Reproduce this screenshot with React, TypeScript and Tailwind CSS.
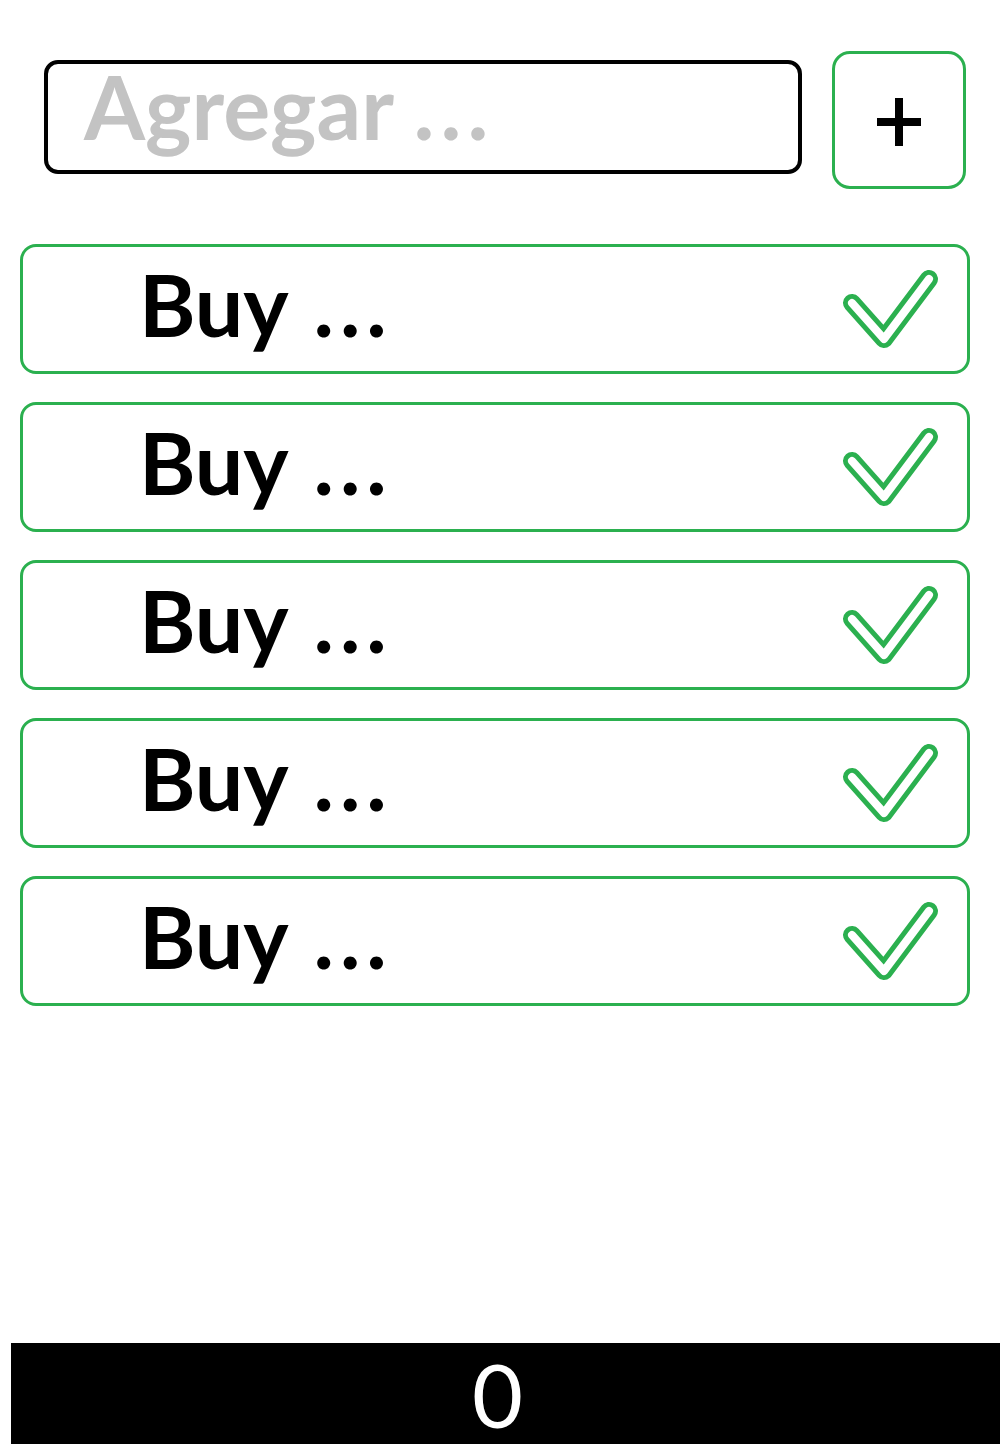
const items = ['Buy', 'Buy', 'Buy', 'Buy', 'Buy'];

function CheckIcon() {
  return (
    <svg width="98" height="82" viewBox="0 0 98 82" fill="none">
      <polyline points="10,35 42,71 87,11" stroke="#2bb04f" strokeWidth="18" strokeLinecap="round" strokeLinejoin="round" />
      <polyline points="10,35 42,71 87,11" stroke="#ffffff" strokeWidth="8" strokeLinecap="round" strokeLinejoin="round" />
    </svg>
  );
}

export default function App() {
  return (
    <div className="flex h-[1444px] w-[1000px] flex-col bg-white font-['Lato',sans-serif]">
      <div className="mt-[51px] flex items-start pl-[44px]">
        <div className="mt-[9px] flex h-[114px] w-[758px] items-center rounded-[14px] border-[4px] border-black pb-[22px] pl-[36px]">
          <span className="text-[88px] font-bold leading-none text-[#c3c3c3]">
            Agregar <span className="tracking-[6px]">...</span>
          </span>
        </div>
        <button className="ml-[30px] flex h-[138px] w-[134px] items-center justify-center rounded-[18px] border-[3px] border-[#2bb04f] bg-white">
          <svg width="44" height="48" viewBox="0 0 44 48" className="mt-[4px]">
            <rect x="0" y="20" width="44" height="8" fill="#000" />
            <rect x="18" y="0" width="8" height="48" fill="#000" />
          </svg>
        </button>
      </div>

      <ul className="mt-[55px] flex flex-col gap-[28px] pl-[20px]">
        {items.map((label, i) => (
          <li
            key={i}
            className="flex h-[130px] w-[950px] items-center justify-between rounded-[16px] border-[3px] border-[#2bb04f] pl-[116px] pr-[27px]"
          >
            <span className="pb-[10px] text-[86px] font-bold leading-none text-black">
              {label} <span className="ml-[6px] tracking-[6px]">...</span>
            </span>
            <CheckIcon />
          </li>
        ))}
      </ul>

      <footer className="ml-[11px] mt-auto flex h-[101px] items-center justify-center bg-black pr-[16px]">
        <span className="text-[88px] font-normal leading-[1] text-white">0</span>
      </footer>
    </div>
  );
}
